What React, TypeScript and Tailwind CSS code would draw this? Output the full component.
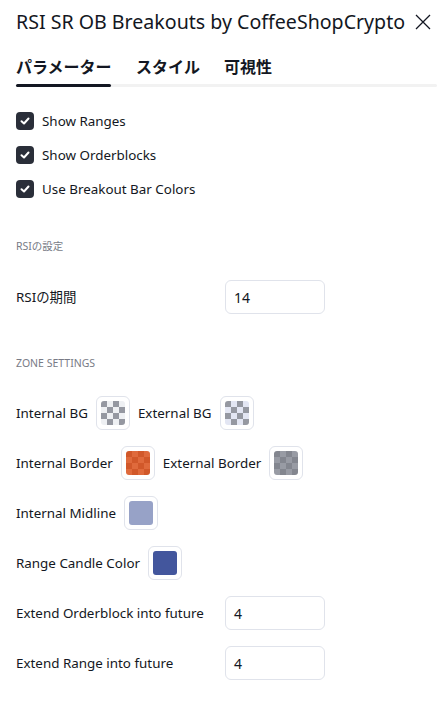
import React from "react";

const font = { fontFamily: '"Noto Sans", "Noto Sans CJK JP", sans-serif' };

function Check() {
  return (
    <span className="w-[18px] h-[18px] rounded-[4px] bg-[#2a2e39] flex items-center justify-center shrink-0">
      <svg width="12" height="12" viewBox="0 0 12 12" fill="none">
        <path d="M2.5 6.2 L5 8.5 L9.5 3.5" stroke="white" strokeWidth="2" strokeLinecap="round" strokeLinejoin="round" />
      </svg>
    </span>
  );
}

function Swatch({ a, b, solid }: { a: string; b?: string; solid?: boolean }) {
  const cells = [];
  for (let r = 0; r < 4; r++) {
    for (let c = 0; c < 4; c++) {
      const dark = (r + c) % 2 === 0;
      cells.push(<div key={r * 4 + c} style={{ background: solid ? a : dark ? a : b }} />);
    }
  }
  return (
    <div className="w-[34px] h-[34px] rounded-[6px] border border-[#e0e3eb] flex items-center justify-center shrink-0">
      <div className="w-[24px] h-[24px] rounded-[3px] overflow-hidden grid grid-cols-4 grid-rows-4">{cells}</div>
    </div>
  );
}

function Input({ v }: { v: string }) {
  return (
    <div className="w-[100px] h-[34px] rounded-[6px] border border-[#e0e3eb] flex items-center px-[8px] text-[14px] text-[#131722]">
      {v}
    </div>
  );
}

export default function App() {
  return (
    <div className="w-[444px] h-[713px] bg-white text-[#131722] overflow-hidden" style={font}>
      <div className="h-[44px] flex items-center pl-[16px] pr-[12px]">
        <div className="text-[19.6px] whitespace-nowrap">RSI SR OB Breakouts by CoffeeShopCrypto</div>
        <svg className="ml-auto" width="18" height="18" viewBox="0 0 18 18" fill="none">
          <path d="M2 2 L16 16 M16 2 L2 16" stroke="#131722" strokeWidth="1.3" />
        </svg>
      </div>
      <div className="pt-[11px] pl-[16px] pr-[7px]">
        <div className="flex h-[24px] items-center text-[16px] font-bold whitespace-nowrap">
          <span className="w-[120px]">パラメーター</span>
          <span className="w-[88px]">スタイル</span>
          <span>可視性</span>
        </div>
        <div className="mt-[5px] h-[3px] rounded-full bg-[#f2f2f2] relative">
          <div className="absolute left-0 top-0 h-[3px] w-[95px] rounded-full bg-[#131722]" />
        </div>
      </div>
      <div className="px-[16px] mt-[17px] flex flex-col text-[13.4px]">
        {["Show Ranges", "Show Orderblocks", "Use Breakout Bar Colors"].map((t) => (
          <div key={t} className="h-[34px] flex items-center gap-[8px]">
            <Check />
            <span>{t}</span>
          </div>
        ))}
        <div className="mt-[32px] h-[16px] leading-[16px] text-[10.5px] text-[#787b86]">RSIの設定</div>
        <div className="mt-[26px] h-[34px] grid grid-cols-[209px_100px] items-center">
          <span>RSIの期間</span>
          <Input v="14" />
        </div>
        <div className="mt-[41px] h-[16px] leading-[16px] text-[10.5px] text-[#787b86] uppercase">Zone Settings</div>
        <div className="mt-[17px] flex flex-col">
          <div className="h-[50px] flex items-center gap-[8px]">
            <span>Internal BG</span>
            <Swatch a="#9598a1" b="#eef0f3" />
            <span>External BG</span>
            <Swatch a="#9598a1" b="#e3e6f3" />
          </div>
          <div className="h-[50px] flex items-center gap-[8px]">
            <span>Internal Border</span>
            <Swatch a="#d1582a" b="#df6a3c" />
            <span>External Border</span>
            <Swatch a="#83868f" b="#989ba4" />
          </div>
          <div className="h-[50px] flex items-center gap-[8px]">
            <span>Internal Midline</span>
            <Swatch a="#97a2c7" solid />
          </div>
          <div className="h-[50px] flex items-center gap-[8px]">
            <span>Range Candle Color</span>
            <Swatch a="#43569d" solid />
          </div>
          <div className="h-[50px] grid grid-cols-[209px_100px] items-center">
            <span>Extend Orderblock into future</span>
            <Input v="4" />
          </div>
          <div className="h-[50px] grid grid-cols-[209px_100px] items-center">
            <span>Extend Range into future</span>
            <Input v="4" />
          </div>
        </div>
      </div>
    </div>
  );
}
